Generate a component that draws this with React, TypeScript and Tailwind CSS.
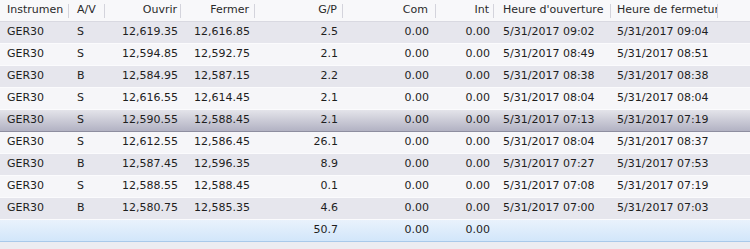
const cols = "grid grid-cols-[70px_36px_76px_74px_88px_93px_58px_117px_107px_1fr]";

const trades = [
  ["GER30", "S", "12,619.35", "12,616.85", "2.5", "0.00", "0.00", "5/31/2017 09:02", "5/31/2017 09:04"],
  ["GER30", "S", "12,594.85", "12,592.75", "2.1", "0.00", "0.00", "5/31/2017 08:49", "5/31/2017 08:51"],
  ["GER30", "B", "12,584.95", "12,587.15", "2.2", "0.00", "0.00", "5/31/2017 08:38", "5/31/2017 08:38"],
  ["GER30", "S", "12,616.55", "12,614.45", "2.1", "0.00", "0.00", "5/31/2017 08:04", "5/31/2017 08:04"],
  ["GER30", "S", "12,590.55", "12,588.45", "2.1", "0.00", "0.00", "5/31/2017 07:13", "5/31/2017 07:19"],
  ["GER30", "S", "12,612.55", "12,586.45", "26.1", "0.00", "0.00", "5/31/2017 08:04", "5/31/2017 08:37"],
  ["GER30", "B", "12,587.45", "12,596.35", "8.9", "0.00", "0.00", "5/31/2017 07:27", "5/31/2017 07:53"],
  ["GER30", "S", "12,588.55", "12,588.45", "0.1", "0.00", "0.00", "5/31/2017 07:08", "5/31/2017 07:19"],
  ["GER30", "B", "12,580.75", "12,585.35", "4.6", "0.00", "0.00", "5/31/2017 07:00", "5/31/2017 07:03"],
];

// per-column cell padding / alignment
const cellCls = [
  "pl-[7px]",
  "pl-[7px]",
  "text-right pr-[4px]",
  "text-right pr-[6px]",
  "text-right pr-[6px]",
  "text-right pr-[8px]",
  "text-right pr-[5px]",
  "pl-[8px]",
  "pl-[5px]",
];

const headers = ["Instrumen", "A/V", "Ouvrir", "Fermer", "G/P", "Com", "Int", "Heure d'ouverture", "Heure de fermeture"];

export default function App() {
  return (
    <div className="w-[750px] h-[249px] overflow-hidden bg-[#ececf1] text-[11px] text-[#1e1e1e] font-['DejaVu_Sans',Verdana,sans-serif]">
      {/* Header */}
      <div className={`${cols} h-[22px] bg-[#f8f8fa] border-b border-[#d9d9e1] text-[#2a2a2a]`}>
        {headers.map((h, i) => (
          <div key={h} className="flex items-center h-full border-r border-transparent relative overflow-hidden">
            <div className={`flex-1 whitespace-nowrap overflow-hidden ${cellCls[i]}`}>{h}</div>
            <div className="absolute right-0 top-[4px] h-[14px] w-px bg-[#d4d4dc]" />
          </div>
        ))}
        <div />
      </div>

      {trades.map((r, idx) => {
        const selected = idx === 4;
        const bg = selected
          ? "bg-gradient-to-b from-[#e4e4ea] to-[#b2b2c3] border-b border-[#8e8ea0]"
          : idx % 2 === 0
          ? "bg-[#e6e6ed] border-b border-[#fbfbfd]"
          : "bg-[#f6f6f9] border-b border-[#fbfbfd]";
        return (
          <div key={idx} className={`${cols} h-[22px] items-center ${bg}`}>
            {r.map((c, i) => (
              <div key={i} className={`whitespace-nowrap overflow-hidden ${cellCls[i]}`}>
                {c}
              </div>
            ))}
            <div />
          </div>
        );
      })}

      {/* Totals */}
      <div className={`${cols} h-[22px] items-center bg-gradient-to-b from-[#e9f2fc] to-[#d2e6fa] border-b border-[#a9c9ea]`}>
        <div />
        <div />
        <div />
        <div />
        <div className={cellCls[4]}>50.7</div>
        <div className={cellCls[5]}>0.00</div>
        <div className={cellCls[6]}>0.00</div>
        <div />
        <div />
        <div />
      </div>
    </div>
  );
}
